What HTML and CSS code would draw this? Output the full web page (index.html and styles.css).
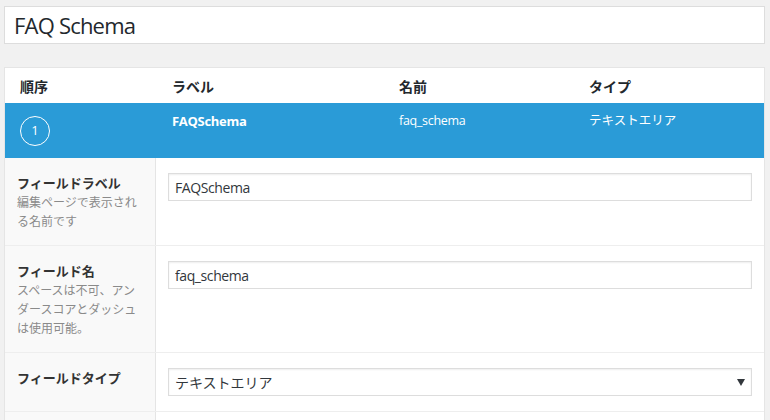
FILE: index.html
```html
<!DOCTYPE html>
<html lang="ja">
<head>
<meta charset="utf-8">
<title>FAQ Schema</title>
<link rel="stylesheet" href="styles.css">
</head>
<body>
<div class="wrap">
  <input class="title-input" type="text" value="FAQ Schema">
  <div class="fields">
    <div class="head">
      <div class="hcell">順序</div>
      <div class="hcell">ラベル</div>
      <div class="hcell">名前</div>
      <div class="hcell">タイプ</div>
    </div>
    <div class="active-row">
      <div class="acell order"><span class="badge">1</span></div>
      <div class="acell label-cell">FAQSchema</div>
      <div class="acell name-cell">faq_schema</div>
      <div class="acell type-cell">テキストエリア</div>
    </div>
    <div class="frow">
      <div class="fleft">
        <div class="flabel">フィールドラベル</div>
        <div class="fdesc">編集ページで表示される名前です</div>
      </div>
      <div class="fright">
        <input class="finput" type="text" value="FAQSchema">
      </div>
    </div>
    <div class="frow">
      <div class="fleft">
        <div class="flabel">フィールド名</div>
        <div class="fdesc">スペースは不可、アンダースコアとダッシュは使用可能。</div>
      </div>
      <div class="fright">
        <input class="finput" type="text" value="faq_schema">
      </div>
    </div>
    <div class="frow">
      <div class="fleft">
        <div class="flabel">フィールドタイプ</div>
      </div>
      <div class="fright">
        <div class="select-wrap">
          <select class="fselect">
            <option>テキストエリア</option>
          </select>
        </div>
      </div>
    </div>
    <div class="frow">
      <div class="fleft">
        <div class="flabel">&nbsp;</div>
      </div>
      <div class="fright"></div>
    </div>
  </div>
</div>
</body>
</html>
```

FILE: styles.css
```css
html, body {
  margin: 0;
  padding: 0;
  background: #f1f1f1;
  height: 420px;
  overflow: hidden;
  font-family: "Open Sans", "Noto Sans CJK JP", sans-serif;
  color: #23282d;
}

.wrap {
  padding: 6px 5px 0 4px;
}

.title-input {
  display: block;
  box-sizing: border-box;
  width: 100%;
  height: 38px;
  margin: 0;
  padding: 0 9px;
  border: 1px solid #dddddd;
  background: #ffffff;
  font-family: "Open Sans", "Noto Sans CJK JP", sans-serif;
  font-size: 22px;
  letter-spacing: -0.8px;
  color: #23282d;
  outline: none;
}

.fields {
  margin-top: 23px;
  border: 1px solid #e5e5e5;
  background: #ffffff;
}

.head,
.active-row {
  display: grid;
  grid-template-columns: 152px 227px 190px 1fr;
}

.head {
  height: 35px;
  align-items: center;
}

.hcell {
  padding-left: 15px;
  font-size: 14px;
  font-weight: 700;
  color: #23282d;
}

.active-row {
  height: 55px;
  background: #2a9bd7;
  color: #ffffff;
}

.acell {
  padding: 8px 0 0 15px;
  font-size: 12.5px;
  line-height: 20px;
  letter-spacing: -0.3px;
}

.acell.order {
  padding: 0 0 0 15px;
  display: flex;
  align-items: center;
}

.badge {
  box-sizing: border-box;
  width: 30px;
  height: 30px;
  border: 1px solid #ffffff;
  border-radius: 50%;
  display: flex;
  align-items: center;
  justify-content: center;
  font-size: 13px;
  line-height: 1;
  letter-spacing: 0;
}

.label-cell {
  font-weight: 700;
  font-size: 13px;
}

.type-cell {
  font-size: 12.5px;
  letter-spacing: 0;
}

.frow {
  display: grid;
  grid-template-columns: 151px 1fr;
  border-top: 1px solid #eeeeee;
}

.active-row + .frow {
  border-top: 0;
}

.fleft {
  background: #f9f9f9;
  border-right: 1px solid #e5e5e5;
  padding: 15px 14px 14px 12px;
}

.flabel {
  font-size: 13px;
  font-weight: 700;
  line-height: 20px;
  color: #333333;
}

.fdesc {
  font-size: 12px;
  line-height: 19px;
  color: #8a8a8a;
}

.fright {
  padding: 15px 12px 15px 12px;
}

.finput,
.fselect {
  display: block;
  box-sizing: border-box;
  width: 100%;
  height: 28px;
  margin: 0;
  padding: 0 6px;
  border: 1px solid #dddddd;
  box-shadow: inset 0 1px 2px rgba(0, 0, 0, 0.07);
  background: #ffffff;
  font-family: "Open Sans", "Noto Sans CJK JP", sans-serif;
  font-size: 14px;
  color: #32373c;
  outline: none;
  border-radius: 0;
}

.finput {
  letter-spacing: -0.4px;
}

.select-wrap {
  position: relative;
}

.fselect {
  -webkit-appearance: none;
  appearance: none;
  padding-left: 6px;
}

.select-wrap::after {
  content: "";
  position: absolute;
  right: 7px;
  top: 11px;
  border-left: 4px solid transparent;
  border-right: 4px solid transparent;
  border-top: 7px solid #32373c;
}
```
